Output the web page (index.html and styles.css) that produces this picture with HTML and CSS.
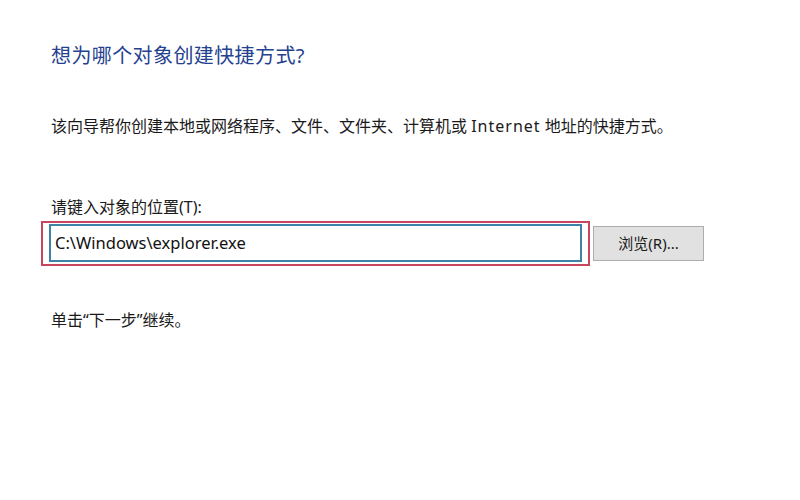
FILE: index.html
```html
<!DOCTYPE html>
<html lang="zh-CN">
<head>
<meta charset="utf-8">
<title>创建快捷方式</title>
<link rel="stylesheet" href="styles.css">
</head>
<body>
<div class="page">
  <h1 class="title">想为哪个对象创建快捷方式?</h1>
  <p class="desc">该向导帮你创建本地或网络程序、文件、文件夹、计算机或 <span class="latin">Internet</span> 地址的快捷方式。</p>
  <label class="label" for="loc">请键入对象的位置(T):</label>
  <div class="row">
    <div class="highlight">
      <input id="loc" class="field" type="text" value="C:\Windows\explorer.exe">
    </div>
    <button class="browse" type="button">浏览(R)...</button>
  </div>
  <p class="hint">单击“下一步”继续。</p>
</div>
</body>
</html>
```

FILE: styles.css
```css
html, body {
  margin: 0;
  padding: 0;
  background: #ffffff;
}
body {
  width: 800px;
  height: 500px;
  overflow: hidden;
  font-family: "Noto Sans", "Noto Sans CJK SC", sans-serif;
  color: #1a1a1a;
}
.page {
  padding: 44px 0 0 51px;
}
.title {
  margin: 0;
  font-size: 20px;
  letter-spacing: 0.4px;
  line-height: 24px;
  font-weight: normal;
  color: #24418f;
}
.desc {
  margin: 48px 0 0 0;
  font-size: 16px;
  line-height: 20px;
}
.latin {
  letter-spacing: 1px;
}
.label {
  display: block;
  margin-top: 61px;
  font-size: 16px;
  line-height: 20px;
}
.row {
  display: flex;
  align-items: center;
  margin: 4px 0 0 -10px;
}
.highlight {
  box-sizing: border-box;
  width: 549px;
  height: 45px;
  border: 2px solid #c7475f;
  padding: 1px 6px 2px 6px;
}
.field {
  box-sizing: border-box;
  display: block;
  width: 100%;
  height: 38px;
  margin: 0;
  border: 2px solid #3f82a8;
  padding: 0 0 2px 4px;
  font-family: "Noto Sans", sans-serif;
  font-size: 16.5px;
  color: #111;
  background: #fff;
  outline: none;
}
.browse {
  box-sizing: border-box;
  width: 111px;
  height: 35px;
  margin-left: 3px;
  background: #e1e1e1;
  border: 1px solid #adadad;
  font-family: "Noto Sans", "Noto Sans CJK SC", sans-serif;
  font-size: 15px;
  color: #1a1a1a;
  padding: 0 0 2px 0;
}
.hint {
  margin: 44px 0 0 0;
  font-size: 16px;
  line-height: 20px;
}
```
